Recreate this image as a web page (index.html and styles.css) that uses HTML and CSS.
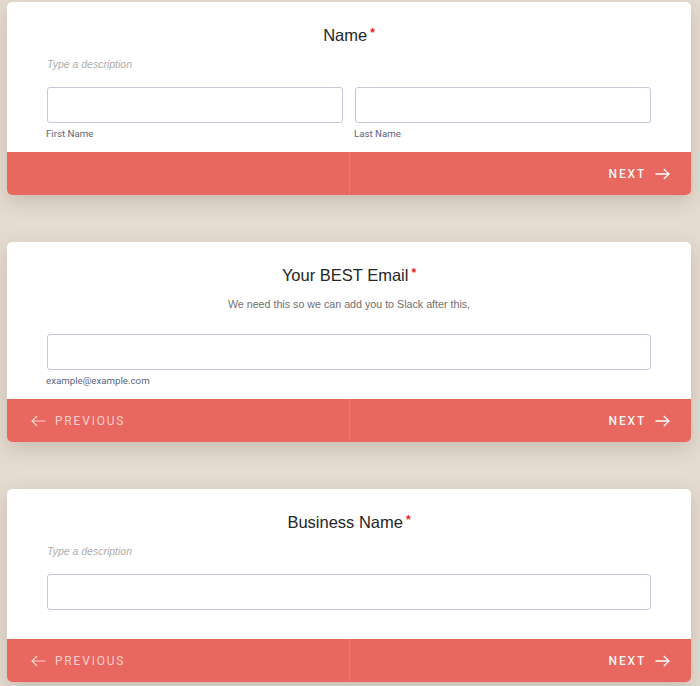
FILE: index.html
```html
<!DOCTYPE html>
<html lang="en">
<head>
<meta charset="utf-8">
<title>Form</title>
<link rel="stylesheet" href="styles.css">
</head>
<body>
<div class="page">
  <section class="card">
    <div class="body body--sub">
      <h2 class="title">Name<span class="req">*</span></h2>
      <p class="desc desc--hint">Type a description</p>
      <div class="row">
        <div class="field">
          <div class="input"></div>
          <div class="sublabel">First Name</div>
        </div>
        <div class="field">
          <div class="input"></div>
          <div class="sublabel">Last Name</div>
        </div>
      </div>
    </div>
    <div class="footer">
      <div class="half"></div>
      <div class="half half--right">
        <span class="btn">NEXT</span>
        <svg class="arrow" width="15" height="12" viewBox="0 0 15 12"><path d="M0.5 6H14M8.8 1L14 6L8.8 11" fill="none" stroke="#fff" stroke-width="1.3"/></svg>
      </div>
    </div>
  </section>

  <section class="card">
    <div class="body body--sub">
      <h2 class="title">Your BEST Email<span class="req">*</span></h2>
      <p class="desc desc--center">We need this so we can add you to Slack after this,</p>
      <div class="row row--single">
        <div class="field">
          <div class="input"></div>
          <div class="sublabel">example@example.com</div>
        </div>
      </div>
    </div>
    <div class="footer">
      <div class="half half--left">
        <svg class="arrow arrow--dim" width="15" height="12" viewBox="0 0 15 12"><path d="M14.5 6H1M6.2 1L1 6L6.2 11" fill="none" stroke="#fff" stroke-width="1.2"/></svg>
        <span class="btn btn--dim">PREVIOUS</span>
      </div>
      <div class="half half--right">
        <span class="btn">NEXT</span>
        <svg class="arrow" width="15" height="12" viewBox="0 0 15 12"><path d="M0.5 6H14M8.8 1L14 6L8.8 11" fill="none" stroke="#fff" stroke-width="1.3"/></svg>
      </div>
    </div>
  </section>

  <section class="card">
    <div class="body body--plain">
      <h2 class="title">Business Name<span class="req">*</span></h2>
      <p class="desc desc--hint">Type a description</p>
      <div class="row row--single">
        <div class="field">
          <div class="input"></div>
        </div>
      </div>
    </div>
    <div class="footer">
      <div class="half half--left">
        <svg class="arrow arrow--dim" width="15" height="12" viewBox="0 0 15 12"><path d="M14.5 6H1M6.2 1L1 6L6.2 11" fill="none" stroke="#fff" stroke-width="1.2"/></svg>
        <span class="btn btn--dim">PREVIOUS</span>
      </div>
      <div class="half half--right">
        <span class="btn">NEXT</span>
        <svg class="arrow" width="15" height="12" viewBox="0 0 15 12"><path d="M0.5 6H14M8.8 1L14 6L8.8 11" fill="none" stroke="#fff" stroke-width="1.3"/></svg>
      </div>
    </div>
  </section>
</div>
</body>
</html>
```

FILE: styles.css
```css
* { box-sizing: border-box; }
html, body {
  margin: 0;
  padding: 0;
  background: #e5dcd1;
  height: 686px;
  overflow: hidden;
}
.page {
  padding: 2px 0 0 7px;
  display: flex;
  flex-direction: column;
  gap: 47px;
}
.card {
  width: 684px;
  background: #fff;
  border-radius: 5px;
  overflow: hidden;
  box-shadow: 0 6px 20px rgba(90, 70, 50, 0.22);
}
.body {
  padding: 22px 40px 0 40px;
}
.body--sub { padding-bottom: 11px; }
.body--plain { padding-bottom: 29px; }
.title {
  margin: 0;
  text-align: center;
  font-family: "Liberation Sans", Arial, sans-serif;
  font-weight: 400;
  font-size: 16.5px;
  line-height: 22px;
  color: #262626;
}
.req {
  color: #ee1c25;
  font-size: 12px;
  font-weight: 700;
  line-height: 0;
  vertical-align: 4px;
  margin-left: 3px;
}
.desc {
  margin: 10px 0 0 0;
  font-family: "Liberation Sans", Arial, sans-serif;
  line-height: 16px;
}
.desc--hint {
  font-style: italic;
  font-size: 10.5px;
  color: #adadad;
}
.desc--center {
  text-align: center;
  font-size: 10.7px;
  color: #6f6f6f;
}
.row {
  margin-top: 15px;
  display: grid;
  grid-template-columns: 1fr 1fr;
  gap: 12px;
}
.desc--center + .row { margin-top: 22px; }
.row--single { grid-template-columns: 1fr; }
.input {
  height: 36px;
  border: 1px solid #c2c9d8;
  border-radius: 3px;
  background: #fff;
}
.sublabel {
  margin-top: 4px;
  font-family: Roboto, "Liberation Sans", sans-serif;
  font-size: 9.7px;
  line-height: 14px;
  color: #5b6579;
  margin-left: -1px;
}
.footer {
  height: 43px;
  background: #e8675f;
  display: grid;
  grid-template-columns: minmax(0, 1fr) minmax(0, 1fr);
}
.half {
  display: flex;
  align-items: center;
  gap: 9px;
}
.half + .half {
  border-left: 1px solid rgba(255, 255, 255, 0.14);
}
.half--left { padding-left: 24px; }
.half--right {
  justify-content: flex-end;
  padding-right: 21px;
}
.btn {
  font-family: Roboto, "Liberation Sans", sans-serif;
  font-weight: 500;
  font-size: 12px;
  letter-spacing: 1.8px;
  color: rgba(255, 255, 255, 0.96);
  line-height: 14px;
}
.btn--dim { font-weight: 400; color: rgba(255, 255, 255, 0.7); }
.arrow { display: block; }
.arrow--dim { opacity: 0.72; }
```
